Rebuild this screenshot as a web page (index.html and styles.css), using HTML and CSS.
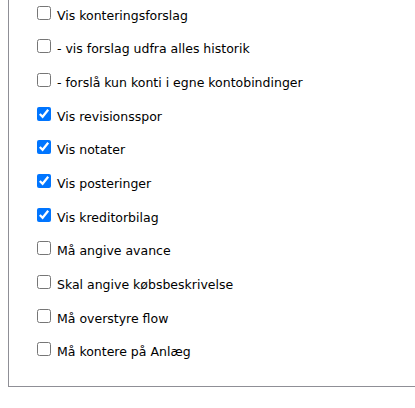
FILE: index.html
```html
<!DOCTYPE html>
<html lang="da">

<head>
    <meta charset="UTF-8">
    <meta name="viewport" content="width=device-width, initial-scale=1.0">
    <title>Indstillinger</title>
    <link rel="stylesheet" href="styles.css">
</head>

<body>

    <div class="settings">
        <div class="row"><label><input type="checkbox"> Vis konteringsforslag</label></div>
        <div class="row"><label><input type="checkbox"> - vis forslag udfra alles historik</label></div>
        <div class="row"><label><input type="checkbox"> - forslå kun konti i egne kontobindinger</label></div>
        <div class="row"><label><input type="checkbox" checked> Vis revisionsspor</label></div>
        <div class="row"><label><input type="checkbox" checked> Vis notater</label></div>
        <div class="row"><label><input type="checkbox" checked> Vis posteringer</label></div>
        <div class="row"><label><input type="checkbox" checked> Vis kreditorbilag</label></div>
        <div class="row"><label><input type="checkbox"> Må angive avance</label></div>
        <div class="row"><label><input type="checkbox"> Skal angive købsbeskrivelse</label></div>
        <div class="row"><label><input type="checkbox"> Må overstyre flow</label></div>
        <div class="row"><label><input type="checkbox"> Må kontere på Anlæg</label></div>
    </div>

</body>

</html>
```

FILE: styles.css
```css
body {
    margin: 0 0 0 8px;
    font-family: 'DejaVu Sans', Verdana, sans-serif;
    font-size: 12.5px;
    color: #000;
}

.settings {
    border-left: 1px solid #8f8f96;
    border-bottom: 1px solid #8f8f96;
    padding: 2.5px 0 13px 24px;
}

.row {
    height: 33.7px;
}

label {
    cursor: pointer;
}

input[type="checkbox"] {
    width: 14px;
    height: 14px;
    margin: 3px 2px 3px 4px;
}
```
